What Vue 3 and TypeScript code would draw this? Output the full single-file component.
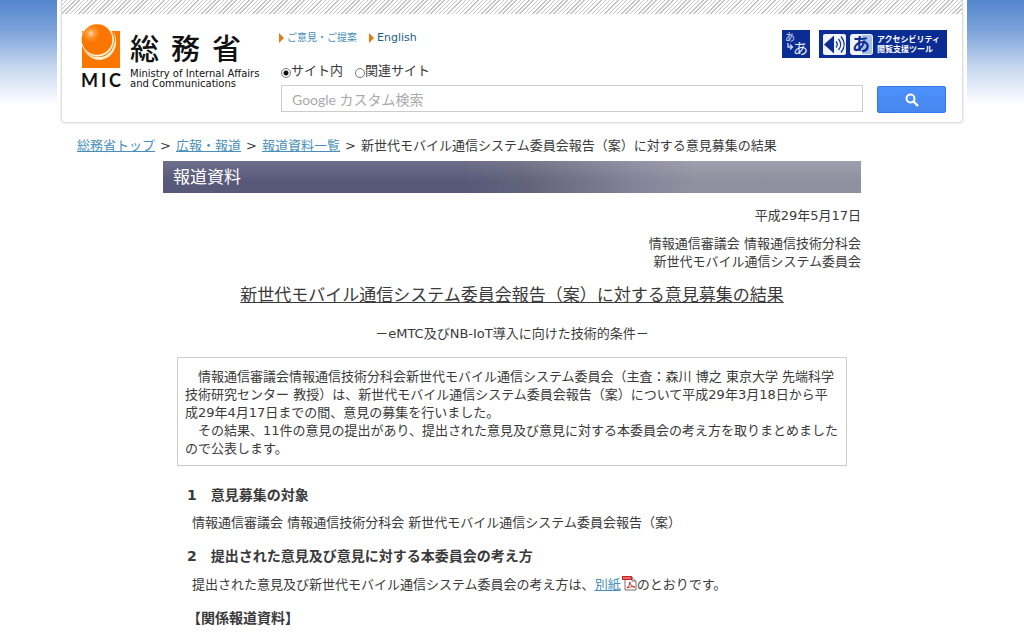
<script setup lang="ts">
import { ref } from 'vue'

const scope = ref<'site' | 'related'>('site')
const query = ref('')

const crumbs: string[] = ['総務省トップ', '広報・報道', '報道資料一覧']
const title = '新世代モバイル通信システム委員会報告（案）に対する意見募集の結果'
</script>

<template>
  <div class="page">
    <div class="sheet">
      <header class="header">
        <div class="hatch"></div>
        <div class="header-body">
          <a class="logo" href="#" aria-label="総務省">
            <span class="logo-mark">
              <svg width="40" height="46" viewBox="0 0 40 46" aria-hidden="true">
                <defs>
                  <radialGradient id="ball" cx="0.3" cy="0.3" r="0.3">
                    <stop offset="0" stop-color="#ffdcb4" />
                    <stop offset="0.4" stop-color="#ff9c3a" />
                    <stop offset="1" stop-color="#fb7600" />
                  </radialGradient>
                </defs>
                <rect x="1" y="8" width="38" height="37" fill="#fb7600" />
                <path d="M30 5Q36 13 33 22Q30 32 20 34Q9 35 2 27Q9 37 20 37Q31 35 34.500 24Q37 13 30 5Z" fill="#fff1cf" />
                <circle cx="16.500" cy="17" r="16.500" fill="#fff1cf" />
                <circle cx="16" cy="16.500" r="15.300" fill="url(#ball)" />
              </svg>
              <span class="mic"><span>M</span><span>I</span><span>C</span></span>
            </span>
            <span class="logo-names">
              <span class="kanji"><span>総</span><span>務</span><span>省</span></span>
              <span class="ministry">Ministry of Internal Affairs<br />and Communications</span>
            </span>
          </a>

          <div class="tools">
            <div class="tools-top">
              <nav class="quick">
                <a href="#"><i class="tri"></i><span class="small">ご意見・ご提案</span></a>
                <a href="#"><i class="tri"></i><span class="en">English</span></a>
              </nav>
              <div class="access">
                <a class="ruby" href="#" aria-label="ふりがな">
                  <svg width="28" height="28" viewBox="0 0 28 28" aria-hidden="true">
                    <rect width="28" height="28" fill="#0b2c92" />
                    <text x="3" y="11" font-size="10" fill="#c8d6f2" class="kana">あ</text>
                    <text x="11" y="24" font-size="15" fill="#e8eefb" class="kana">あ</text>
                    <path d="M6 13v4h4M8 14.500l2.500 2.500-2.500 2.500" fill="none" stroke="#c8d6f2" stroke-width="1.300" />
                  </svg>
                </a>
                <a class="assist" href="#">
                  <svg width="54" height="28" viewBox="0 0 54 28" aria-hidden="true">
                    <rect x="4" y="4" width="23" height="21" rx="2" fill="#eef3fc" />
                    <path d="M5 14.500l10-9v18z" fill="#0b2c92" />
                    <path d="M17 11.500q2.500 3 0 6M19.500 9q4.500 5.500 0 11M22 6.500q6.500 8 0 16" fill="none" stroke="#0b2c92" stroke-width="1.200" />
                    <rect x="31" y="4" width="23" height="21" rx="3" fill="#eef3fc" />
                    <path d="M43 5h8q2 0 2 2v15q0 2-2 2h-8z" fill="#aebfe6" />
                    <text x="33" y="21" font-size="18" font-weight="700" fill="#0b2c92" class="kana">あ</text>
                  </svg>
                  <span class="assist-text">アクセシビリティ<br />閲覧支援ツール</span>
                </a>
              </div>
            </div>

            <div class="scopes">
              <label><input v-model="scope" type="radio" name="scope" value="site" />サイト内</label>
              <label><input v-model="scope" type="radio" name="scope" value="related" />関連サイト</label>
            </div>

            <form class="search" @submit.prevent>
              <input v-model="query" type="text" aria-label="検索" placeholder="Google カスタム検索" />
              <button type="submit" aria-label="検索">
                <svg width="14" height="14" viewBox="0 0 14 14" aria-hidden="true">
                  <circle cx="5.500" cy="5.500" r="4" fill="none" stroke="#fff" stroke-width="2" />
                  <path d="M8.500 8.500l4.500 4.500" stroke="#fff" stroke-width="2.400" />
                </svg>
              </button>
            </form>
          </div>
        </div>
      </header>

      <nav class="crumbs">
        <template v-for="c in crumbs" :key="c"><a href="#">{{ c }}</a><span class="sep">&gt;</span></template>
        <span>{{ title }}</span>
      </nav>

      <main class="content">
        <div class="banner">報道資料</div>
        <p class="date">平成29年5月17日</p>
        <p class="sender">情報通信審議会 情報通信技術分科会<br />新世代モバイル通信システム委員会</p>
        <h1>{{ title }}</h1>
        <p class="subtitle">－eMTC及びNB-IoT導入に向けた技術的条件－</p>
        <div class="summary">
          　情報通信審議会情報通信技術分科会新世代モバイル通信システム委員会（主査：森川 博之 東京大学 先端科学<br />技術研究センター 教授）は、新世代モバイル通信システム委員会報告（案）について平成29年3月18日から平<br />成29年4月17日までの間、意見の募集を行いました。<br />　その結果、11件の意見の提出があり、提出された意見及び意見に対する本委員会の考え方を取りまとめました<br />ので公表します。
        </div>
        <h2>1　意見募集の対象</h2>
        <p class="text">情報通信審議会 情報通信技術分科会 新世代モバイル通信システム委員会報告（案）</p>
        <h2>2　提出された意見及び意見に対する本委員会の考え方</h2>
        <p class="text">
          提出された意見及び新世代モバイル通信システム委員会の考え方は、<a href="#">別紙<svg class="pdf" width="16" height="16" viewBox="0 0 16 16" aria-hidden="true"><path d="M4 2h7l4 4v9H4z" fill="#fff" stroke="#7d6a6a" /><path d="M11 2v4h4" fill="#ddd" stroke="#7d6a6a" /><rect x="1" y="1" width="10" height="4" fill="#cc2222" /><path d="M3 2v2M5 2v2M7 2v2M9 2v2" stroke="#f3b5b5" /><path d="M6 13q3-3 3-6 0 4 5 5-5-1-8 1" fill="none" stroke="#c33" /></svg></a>のとおりです。
        </p>
        <h2>【関係報道資料】</h2>
      </main>
    </div>
  </div>
</template>

<style>
body {
  margin: 0;
}
</style>

<style scoped>
.page {
  background: linear-gradient(#5386cd, #7ba2da 30px, #c2d4ef 65px, #fff 105px);
  color: #3a3a3a;
  font: 13px/18px "DejaVu Sans", "Noto Sans CJK JP", sans-serif;
}

.sheet {
  box-sizing: border-box;
  max-width: 910px;
  min-height: 100vh;
  margin: 0 auto;
  padding: 0 4px;
  background: #fff;
}

a {
  color: #4a8fbb;
}

.header {
  border: 1px solid #ddd;
  border-top: 0;
  border-radius: 0 0 4px 4px;
  box-shadow: 0 0 3px #ddd;
}

.hatch {
  height: 14px;
  background: repeating-linear-gradient(135deg, #c4c4c4 0 1px, #fff 1px 3px);
}

.header-body {
  display: flex;
  gap: 18px;
  padding: 9px 15px 9px 19px;
}

.logo {
  display: flex;
  gap: 9px;
  color: #111;
  text-decoration: none;
}

.logo-mark {
  width: 40px;
}

.logo-mark svg {
  display: block;
}

.mic {
  display: flex;
  justify-content: space-between;
  font: 700 18px/22px Lato, sans-serif;
}

.kanji {
  display: flex;
  gap: 12px;
  padding-top: 4px;
  font: 500 29px/41px "Noto Sans CJK JP", sans-serif;
}

.ministry {
  display: block;
  width: 131px;
  padding-top: 1px;
  font-size: 10px;
  line-height: 10px;
  white-space: nowrap;
}

.tools {
  flex: 1;
}

.tools-top {
  display: flex;
  justify-content: space-between;
  padding-top: 7px;
}

.quick {
  display: flex;
  gap: 12px;
  height: 16px;
}

.quick a {
  display: flex;
  align-items: center;
  gap: 3px;
  text-decoration: none;
}

.tri {
  border: 5px solid transparent;
  border-right: 0;
  border-left-color: #dc7d12;
}

.small {
  font-size: 10px;
}

.en {
  color: #236080;
  font-size: 11px;
}

.access {
  display: flex;
  gap: 9px;
}

.access a {
  height: 28px;
}

.kana {
  font-family: "Noto Sans CJK JP", sans-serif;
}

.assist {
  display: flex;
  align-items: center;
  gap: 4px;
  width: 128px;
  background: #0b2c92;
  color: #fff;
  text-decoration: none;
}

.assist-text {
  font: 700 8px/10px "Noto Sans CJK JP", sans-serif;
  white-space: nowrap;
}

.scopes {
  display: flex;
  gap: 12px;
  padding: 4px 0 0 2px;
}

.scopes label {
  display: flex;
}

.scopes input {
  appearance: none;
  box-sizing: border-box;
  width: 10px;
  height: 10px;
  margin: 6px 0 0;
  border: 1px solid #777;
  border-radius: 50%;
}

.scopes input:checked {
  background: radial-gradient(#111 0 2px, #fff 3px);
}

.search {
  display: flex;
  gap: 14px;
  padding: 5px 1px 0 2px;
}

.search input {
  box-sizing: border-box;
  flex: 1;
  height: 27px;
  padding: 2px 10px 0;
  border: 1px solid #ccc;
  font: 14px/20px Lato, "Noto Sans CJK JP", sans-serif;
}

.search input::placeholder {
  color: #aaa;
}

.search button {
  display: flex;
  align-items: center;
  justify-content: center;
  width: 69px;
  height: 27px;
  margin-top: 1px;
  padding: 0;
  border: 1px solid #3079ed;
  border-radius: 2px;
  background: linear-gradient(#4d90fe, #4787ed);
}

.crumbs {
  display: flex;
  padding: 14px 0 0 16px;
}

.sep {
  width: 21px;
  text-align: center;
}

.content {
  margin: 6px 102px 0;
}

.banner {
  padding: 0 10px;
  background:
    linear-gradient(#ffffff22, #ffffff00 20px),
    linear-gradient(90deg, #58597a 0 43%, #62637a 52%, #85839a 68%, #9190a0 76%);
  color: #fff;
  font-size: 17px;
  line-height: 32px;
}

p {
  margin: 0;
}

.date {
  padding-top: 14px;
  text-align: right;
}

.sender {
  padding-top: 10px;
  text-align: right;
}

h1 {
  margin: 11px 0 0;
  font-size: 17px;
  font-weight: 400;
  line-height: 26px;
  text-align: center;
  text-decoration: underline;
}

.subtitle {
  padding-top: 17px;
  text-align: center;
}

.summary {
  margin: 14px 14px 19px;
  padding: 10px 0 7px 7px;
  border: 1px solid #ccc;
}

h2 {
  margin: 0;
  padding: 0 24px;
  font-size: 14px;
  line-height: 20px;
}

.text {
  padding: 9px 29px 14px;
}

.pdf {
  vertical-align: -2px;
}
</style>
